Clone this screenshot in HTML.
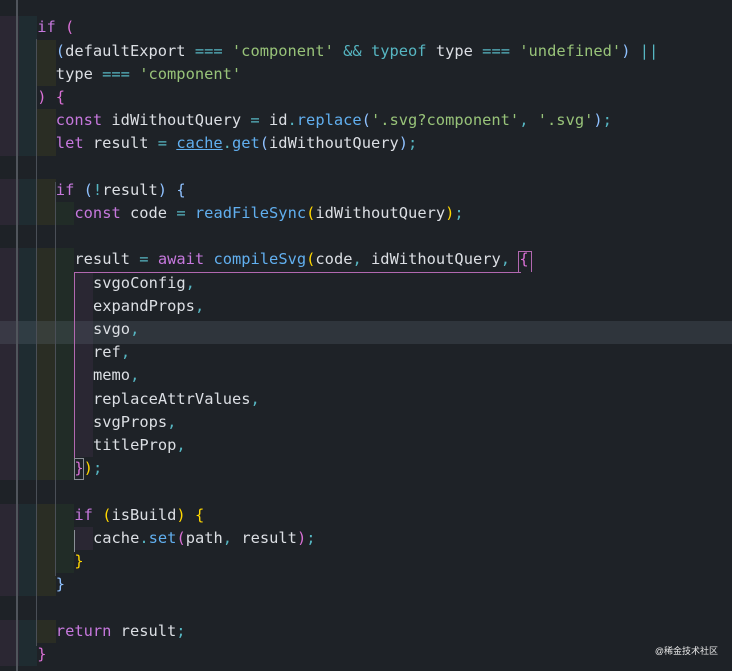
<!DOCTYPE html>
<html><head><meta charset="utf-8"><style>
html,body{margin:0;padding:0;background:#1e2227;width:732px;height:671px;overflow:hidden;position:relative}
.l{position:absolute;left:0;height:23.2px;line-height:23.2px;font-family:"DejaVu Sans Mono","Liberation Mono",monospace;font-size:15.4px;color:#dcdfe4;white-space:pre}
.b{position:absolute;width:18.6px;height:23.2px}
.c0{background:#2b2733}.c1{background:#1f2c31}.c2{background:#2a2d24}.c3{background:#212c27}.c4{background:#2a2733}
.g{position:absolute;width:1px;background:#4a4f57}
.k{color:#c678dd}.s{color:#98c379}.o{color:#56b6c2}.f{color:#61afef}
.y{color:#ffd700}.p{color:#da70d6}.bl{color:#179fff}.lb{color:#8fc1ff}
</style></head><body>
<div id="bg"></div>
<div style="position:absolute;left:0;top:320.8px;width:732px;height:23.2px;background:rgba(110,122,138,0.22)"></div>
<div id="c"></div>
<div class="g" style="left:16px;top:0;height:671px;width:2px;background:#50555c"></div>
<div class="g" style="left:36px;top:39px;height:607px"></div>
<div class="g" style="left:55px;top:182px;height:394px"></div>
<div class="g" style="left:74px;top:530px;height:22px;background:#8a8f96"></div>
<div style="position:absolute;left:74px;top:272px;width:447px;height:1px;background:#b268b0"></div>
<div style="position:absolute;left:74px;top:272px;width:1px;height:208px;background:#b268b0"></div>
<div style="position:absolute;left:518px;top:251px;width:14px;height:21px;border:1px solid #b268b0;border-bottom:none;box-sizing:border-box"></div>
<div style="position:absolute;left:74px;top:458px;width:10px;height:22px;border:1px solid #8a8f96;box-sizing:border-box"></div>
<div style="position:absolute;right:14px;top:644px;font-family:'Liberation Sans','Noto Sans CJK SC',sans-serif;font-size:9px;color:#e8e8e8">@稀金技术社区</div>
<script>
var L=[
[2,'<span class="k">if</span> <span class="p">(</span>'],
[3,'<span class="lb">(</span>defaultExport <span class="o">===</span> <span class="s">\'component\'</span> <span class="o">&amp;&amp;</span> <span class="o">typeof</span> type <span class="o">===</span> <span class="s">\'undefined\'</span><span class="lb">)</span> <span class="o">||</span>'],
[3,'type <span class="o">===</span> <span class="s">\'component\'</span>'],
[2,'<span class="p">)</span> <span class="p">{</span>'],
[3,'<span class="k">const</span> idWithoutQuery <span class="o">=</span> id<span class="o">.</span><span class="f">replace</span><span class="lb">(</span><span class="s">\'.svg?component\'</span><span class="o">,</span> <span class="s">\'.svg\'</span><span class="lb">)</span><span class="o">;</span>'],
[3,'<span class="k">let</span> result <span class="o">=</span> <span class="f" style="text-decoration:underline">cache</span><span class="o">.</span><span class="f">get</span><span class="lb">(</span>idWithoutQuery<span class="lb">)</span><span class="o">;</span>'],
null,
[3,'<span class="k">if</span> <span class="lb">(</span><span class="o">!</span>result<span class="lb">)</span> <span class="lb">{</span>'],
[4,'<span class="k">const</span> code <span class="o">=</span> <span class="f">readFileSync</span><span class="y">(</span>idWithoutQuery<span class="y">)</span><span class="o">;</span>'],
null,
[4,'result <span class="o">=</span> <span class="k">await</span> <span class="f">compileSvg</span><span class="y">(</span>code<span class="o">,</span> idWithoutQuery<span class="o">,</span> <span class="p">{</span>'],
[5,'svgoConfig<span class="o">,</span>'],
[5,'expandProps<span class="o">,</span>'],
[5,'svgo<span class="o">,</span>'],
[5,'ref<span class="o">,</span>'],
[5,'memo<span class="o">,</span>'],
[5,'replaceAttrValues<span class="o">,</span>'],
[5,'svgProps<span class="o">,</span>'],
[5,'titleProp<span class="o">,</span>'],
[4,'<span class="p">}</span><span class="y">)</span><span class="o">;</span>'],
null,
[4,'<span class="k">if</span> <span class="y">(</span>isBuild<span class="y">)</span> <span class="y">{</span>'],
[5,'cache<span class="o">.</span><span class="f">set</span><span class="p">(</span>path<span class="o">,</span> result<span class="p">)</span><span class="o">;</span>'],
[4,'<span class="y">}</span>'],
[3,'<span class="lb">}</span>'],
null,
[3,'<span class="k">return</span> result<span class="o">;</span>'],
[2,'<span class="p">}</span>']
];
var h='',g='';
for(var i=0;i<L.length;i++){var t=16.4+i*23.2;var e=L[i];if(!e)continue;
for(var j=0;j<e[0];j++){g+='<div class="b c'+(j%5)+'" style="left:'+(j*18.6)+'px;top:'+t+'px"></div>';}
h+='<div class="l" style="left:'+(e[0]*18.6)+'px;top:'+t+'px">'+e[1]+'</div>';}
document.getElementById('bg').innerHTML=g;
document.getElementById('c').innerHTML=h;
</script>
</body></html>
